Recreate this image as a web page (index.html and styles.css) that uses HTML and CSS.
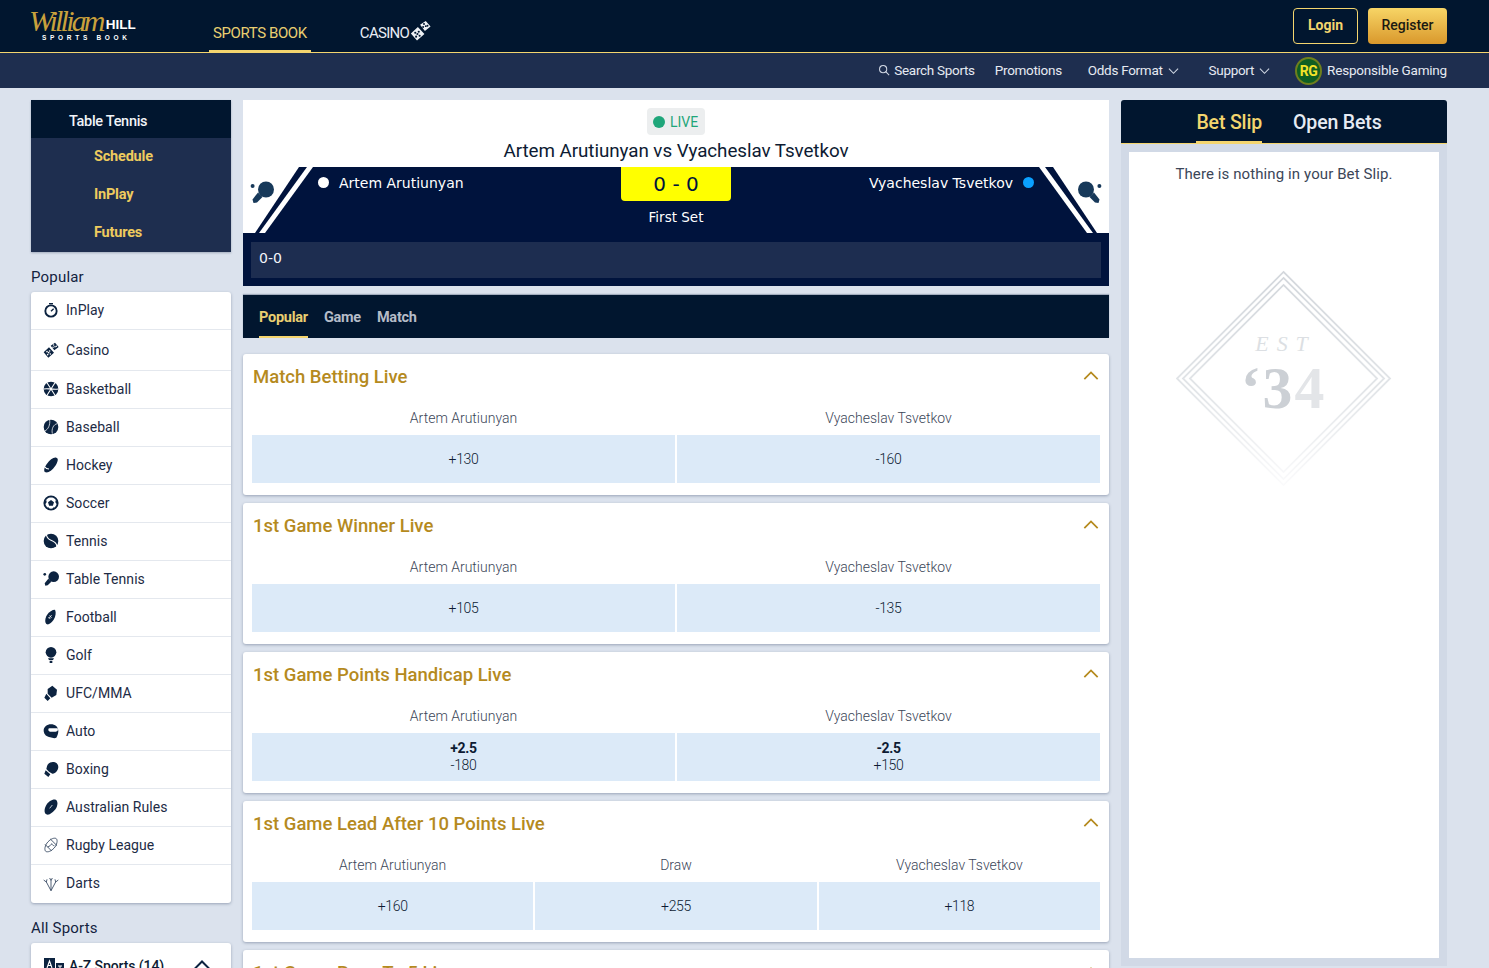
FILE: index.html
```html
<!DOCTYPE html>
<html lang="en">
<head>
<meta charset="utf-8">
<title>William Hill Sports Book</title>
<link rel="stylesheet" href="styles.css">
</head>
<body>
<svg class="defs" width="0" height="0" aria-hidden="true">
  <symbol id="i-paddle" viewBox="0 0 24 24">
    <circle cx="2.600" cy="5" r="2"/>
    <circle cx="16" cy="8.500" r="8"/>
    <path d="M8 11.500l4.500 4.500-5.500 5.500-3.500.5-1-3.500z"/>
  </symbol>
  <symbol id="i-dice" viewBox="0 0 24 24">
    <path d="M11.500 5.500L18 1l5.500 6.500-6.500 5zM1 15.500L9 8l7.500 8L8 23.500z"/>
    <g class="pip"><circle cx="16" cy="4.500" r="1.100"/><circle cx="18" cy="7" r="1.100"/><circle cx="20" cy="6.500" r="1.100"/><circle cx="15" cy="8" r="1.100"/><circle cx="6" cy="14.500" r="1.200"/><circle cx="10" cy="13.500" r="1.200"/><circle cx="8.500" cy="16" r="1.200"/><circle cx="7" cy="19" r="1.200"/><circle cx="11" cy="18" r="1.200"/></g>
  </symbol>
</svg>

<header class="top">
  <div class="logo">
    <div class="logo-main"><span class="logo-script">William</span><span class="logo-hill">HILL</span></div>
    <div class="logo-sub">SPORTS BOOK</div>
  </div>
  <nav class="main-nav">
    <a class="main-tab is-active">SPORTS BOOK</a>
    <a class="main-tab casino-tab">CASINO<svg class="casino-dice" viewBox="0 0 24 24"><use href="#i-dice"/></svg></a>
  </nav>
  <div class="auth">
    <a class="btn btn-login">Login</a>
    <a class="btn btn-register">Register</a>
  </div>
</header>

<nav class="sub-nav">
  <a class="sub-link sub-search"><svg class="search-ic" viewBox="0 0 14 14"><circle cx="6" cy="6" r="4.200"/><path d="M9 9l4 4"/></svg>Search Sports</a>
  <a class="sub-link sub-promos">Promotions</a>
  <a class="sub-link sub-odds">Odds Format<svg class="chev" viewBox="0 0 12 8"><path d="M1 1.500l5 5 5-5"/></svg></a>
  <a class="sub-link sub-support">Support<svg class="chev" viewBox="0 0 12 8"><path d="M1 1.500l5 5 5-5"/></svg></a>
  <a class="sub-link sub-rg"><span class="rg-badge">RG</span><span class="rg-text">Responsible Gaming</span></a>
</nav>

<main class="layout">
  <aside class="left">
    <section class="sport-menu">
      <div class="sport-menu-title">Table Tennis</div>
      <a class="sport-menu-item">Schedule</a>
      <a class="sport-menu-item">InPlay</a>
      <a class="sport-menu-item">Futures</a>
    </section>

    <h3 class="side-title">Popular</h3>
    <ul class="side-list">
      <li class="side-item"><svg class="side-ic" viewBox="0 0 24 24"><circle cx="12" cy="13.500" r="8.500" class="ic-ring"/><path d="M9 1.500h6v2H9z"/><path d="M12 14l4-4" class="ic-line"/></svg>InPlay</li>
      <li class="side-item side-item-casino"><svg class="side-ic" viewBox="0 0 24 24"><use href="#i-dice"/></svg>Casino</li>
      <li class="side-item"><svg class="side-ic" viewBox="0 0 24 24"><circle cx="12" cy="12" r="11"/><path class="ic-cut" d="M6 2.500L18 21.500M18 2.500L6 21.500M1 12c5-1 8 0 11 0s6 1 11 0"/></svg>Basketball</li>
      <li class="side-item"><svg class="side-ic" viewBox="0 0 24 24"><circle cx="12" cy="12" r="11"/><path class="ic-cut-thin" d="M10 1.500C11 8 8 16 2.500 18M21.500 7c-6 1-9 8-7.500 15"/></svg>Baseball</li>
      <li class="side-item"><svg class="side-ic" viewBox="0 0 24 24"><path d="M4 23c-4-1-2-8 2-13 4-6 10-10 14-9s2 7-2 13-10 10-14 9z"/><path class="ic-cut" d="M3 15c1 2 3 3 6 3"/></svg>Hockey</li>
      <li class="side-item"><svg class="side-ic" viewBox="0 0 24 24"><circle cx="12" cy="12" r="10" class="ic-ring"/><path d="M12 7.500l4.500 3.300-1.700 5.200H9.200l-1.700-5.200zM10 2h4l-2 2zM2.500 9.500L5 8l.5 3-2.500 3zM21.500 9.500L19 8l-.5 3 2.500 3zM6 20l2.500-1.500L10 22zM18 20l-2.500-1.500L14 22z"/></svg>Soccer</li>
      <li class="side-item"><svg class="side-ic" viewBox="0 0 24 24"><circle cx="12" cy="12" r="11"/><path class="ic-cut" d="M5 2.500c1 5 3 7 7 8.500s8 4 9 9"/></svg>Tennis</li>
      <li class="side-item"><svg class="side-ic" viewBox="0 0 24 24"><use href="#i-paddle"/></svg>Table Tennis</li>
      <li class="side-item"><svg class="side-ic" viewBox="0 0 24 24"><path d="M6 23c-4-2-3-9 0-14 3-5 8-8 12-8 2 4 1 10-2 15-3 4-7 8-10 7z"/><path class="ic-cut-thin" d="M9 14l4-5M9.500 10l3.500 3M8 12l3 3"/></svg>Football</li>
      <li class="side-item"><svg class="side-ic" viewBox="0 0 24 24"><circle cx="12" cy="8" r="8"/><path d="M7.500 17h9l-1.500 2.500H9zM10 20.500h4V24h-4z"/></svg>Golf</li>
      <li class="side-item"><svg class="side-ic" viewBox="0 0 24 24"><path d="M7 6l7-5 7 6-1 8-7 4-6-6zM5 13l6 7-4 4-5-5z"/></svg>UFC/MMA</li>
      <li class="side-item"><svg class="side-ic" viewBox="0 0 24 24"><path d="M12 2c6 0 11 4 11 10 0 3-1 7-3 10l-3 1-8-2C4 20 1 16 1 11 1 6 6 2 12 2z"/><path class="ic-white" d="M11 8h11c1 3 0 5-3 5h-7c-2 0-4-1-4-3s1-2 3-2z"/></svg>Auto</li>
      <li class="side-item"><svg class="side-ic" viewBox="0 0 24 24"><path d="M6 8c1-5 7-8 12-6s6 7 4 11-5 6-8 6l-5-3-4-4zM4 14l7 6-3 4-6-5z"/></svg>Boxing</li>
      <li class="side-item"><svg class="side-ic" viewBox="0 0 24 24"><path d="M5 23c-4-2-3-9 0-14 3-5 9-9 14-8 4 2 3 9 0 14-4 5-10 10-14 8z"/><path class="ic-cut-thin" d="M10 14l4-5"/></svg>Australian Rules</li>
      <li class="side-item"><svg class="side-ic ic-outline" viewBox="0 0 24 24"><path d="M5 22c-3-1-3-7 1-13 4-5 9-8 13-7 3 1 3 7-1 13-4 5-9 8-13 7z"/><path d="M3 11l10 10M11 3l10 10M7 15c3-1 5-3 6-5 1 2 2 3 4 3"/></svg>Rugby League</li>
      <li class="side-item side-item-last"><svg class="side-ic ic-outline" viewBox="0 0 24 24"><path d="M12 22V7M12 22L5 9M12 22l7-13M1 6l4 3 1-4M23 6l-4 3-1-4M10 3l2 4 2-4"/></svg>Darts</li>
    </ul>

    <h3 class="side-title side-title-all">All Sports</h3>
    <div class="side-list az">
      <svg class="az-ic" viewBox="0 0 20 16"><path d="M0 0h11v12H0z"/><path d="M12 5h8v10h-8z"/><path class="ic-cut-thin" d="M3 10l2.500-7L8 10M4 7.500h3M14 8h4M16 8v5"/></svg>
      <span class="az-label">A-Z Sports (14)</span>
      <svg class="az-chev" viewBox="0 0 18 10"><path d="M1.500 9L9 1.500 16.500 9"/></svg>
    </div>
  </aside>

  <section class="center">
    <div class="scoreboard">
      <div class="score-head">
        <span class="live"><i class="live-dot"></i>LIVE</span>
        <h1 class="match-title">Artem Arutiunyan vs Vyacheslav Tsvetkov</h1>
      </div>
      <div class="score-band">
        <svg class="corner corner-left" viewBox="0 0 70 66">
          <path class="c-white" d="M0 0h70L22 66H0z"/>
          <path class="c-navy" d="M56 0h8L16 66h-4z"/>
          <use href="#i-paddle" class="c-paddle" x="7" y="14" width="24" height="24"/>
        </svg>
        <svg class="corner corner-right" viewBox="0 0 70 66">
          <path class="c-white" d="M0 0h70v66H48z"/>
          <path class="c-navy" d="M6 0h8l44 66h-4z"/>
          <g transform="translate(63 14) scale(-1 1)"><use href="#i-paddle" class="c-paddle" width="24" height="24"/></g>
        </svg>
        <div class="player player-home"><i class="pdot pdot-white"></i>Artem Arutiunyan</div>
        <div class="score-mid">
          <div class="score-box">0 - 0</div>
          <div class="score-set">First Set</div>
        </div>
        <div class="player player-away">Vyacheslav Tsvetkov<i class="pdot pdot-blue"></i></div>
      </div>
      <div class="score-bottom"><div class="score-line">0-0</div></div>
    </div>

    <nav class="tabs">
      <a class="tab is-active">Popular</a>
      <a class="tab">Game</a>
      <a class="tab">Match</a>
    </nav>

    <article class="market">
      <header class="market-head"><h2 class="market-title">Match Betting Live</h2><svg class="market-chev" viewBox="0 0 18 10"><path d="M1.500 9L9 1.500 16.500 9"/></svg></header>
      <div class="runners cols-2"><span>Artem Arutiunyan</span><span>Vyacheslav Tsvetkov</span></div>
      <div class="odds cols-2"><button class="odd">+130</button><button class="odd">-160</button></div>
    </article>

    <article class="market">
      <header class="market-head"><h2 class="market-title">1st Game Winner Live</h2><svg class="market-chev" viewBox="0 0 18 10"><path d="M1.500 9L9 1.500 16.500 9"/></svg></header>
      <div class="runners cols-2"><span>Artem Arutiunyan</span><span>Vyacheslav Tsvetkov</span></div>
      <div class="odds cols-2"><button class="odd">+105</button><button class="odd">-135</button></div>
    </article>

    <article class="market">
      <header class="market-head"><h2 class="market-title">1st Game Points Handicap Live</h2><svg class="market-chev" viewBox="0 0 18 10"><path d="M1.500 9L9 1.500 16.500 9"/></svg></header>
      <div class="runners cols-2"><span>Artem Arutiunyan</span><span>Vyacheslav Tsvetkov</span></div>
      <div class="odds cols-2"><button class="odd"><b>+2.5</b>-180</button><button class="odd"><b>-2.5</b>+150</button></div>
    </article>

    <article class="market">
      <header class="market-head"><h2 class="market-title">1st Game Lead After 10 Points Live</h2><svg class="market-chev" viewBox="0 0 18 10"><path d="M1.500 9L9 1.500 16.500 9"/></svg></header>
      <div class="runners cols-3"><span>Artem Arutiunyan</span><span>Draw</span><span>Vyacheslav Tsvetkov</span></div>
      <div class="odds cols-3"><button class="odd">+160</button><button class="odd">+255</button><button class="odd">+118</button></div>
    </article>

    <article class="market">
      <header class="market-head"><h2 class="market-title">1st Game Race To 5 Live</h2><svg class="market-chev" viewBox="0 0 18 10"><path d="M1.500 9L9 1.500 16.500 9"/></svg></header>
    </article>
  </section>

  <aside class="right">
    <div class="slip-tabs">
      <a class="slip-tab is-active">Bet Slip</a>
      <a class="slip-tab">Open Bets</a>
    </div>
    <div class="slip-body">
      <p class="slip-empty">There is nothing in your Bet Slip.</p>
      <svg class="est" viewBox="0 0 220 220" aria-hidden="true">
        <defs>
          <linearGradient id="fade" gradientUnits="userSpaceOnUse" x1="0" y1="0" x2="0" y2="218">
            <stop offset="0" stop-color="#d3d7dc"/>
            <stop offset=".55" stop-color="#e2e5e8"/>
            <stop offset="1" stop-color="#fbfbfc"/>
          </linearGradient>
        </defs>
        <path class="est-line" d="M108 2L215 109 108 216 1 109z"/>
        <path class="est-line" d="M108 8L209 109 108 210 7 109z"/>
        <path class="est-line" d="M108 15L202 109 108 203 14 109z"/>
        <text class="est-small" x="110" y="81" text-anchor="middle">EST</text>
        <text class="est-big" x="108" y="139" text-anchor="middle">‘3<tspan class="est-four">4</tspan></text>
      </svg>
    </div>
  </aside>
</main>
</body>
</html>
```

FILE: styles.css
```css
* { box-sizing: border-box; }
html, body { margin: 0; padding: 0; }
body {
  width: 1489px;
  height: 968px;
  overflow: hidden;
  background: #dbe2ed;
  font-family: "Roboto", "Liberation Sans", sans-serif;
  color: #0d1b33;
}
a { color: inherit; text-decoration: none; }
h1, h2, h3, p, ul { margin: 0; padding: 0; font-weight: 400; }
ul { list-style: none; }
.defs { position: absolute; }
.pip { fill: var(--pip, #fff); }

/* top bar */
.top {
  height: 53px;
  background: #01162f;
  border-bottom: 1px solid #f4d56e;
  display: flex;
  align-items: stretch;
  padding: 0 42px 0 31px;
}
.logo { width: 178px; padding-top: 9px; }
.logo-main { display: flex; align-items: flex-end; height: 24px; margin-left: -2px; }
.logo-script {
  font-family: "Liberation Serif", serif;
  font-style: italic;
  font-size: 30px;
  line-height: 24px;
  letter-spacing: -2.800px;
  color: #c9a13c;
}
.logo-hill {
  font-family: "Liberation Sans", sans-serif;
  font-weight: 700;
  font-size: 13.500px;
  line-height: 15px;
  color: #fff;
  margin-left: 3px;
  margin-bottom: 1px;
}
.logo-sub {
  font-family: "Liberation Sans", sans-serif;
  font-size: 6.500px;
  line-height: 9px;
  letter-spacing: 3.700px;
  color: #fff;
  font-weight: 700;
  padding-left: 11px;
  white-space: nowrap;
}
.main-nav { display: flex; flex: 1; align-items: stretch; gap: 45px; }
.main-tab {
  display: flex;
  align-items: center;
  padding: 15px 4px 0;
  font-size: 15px;
  letter-spacing: -.4px;
  color: #e9edf5;
  border-bottom: 3px solid transparent;
  margin-bottom: -1px;
}
.main-tab.is-active { color: #e9cf71; border-bottom-color: #f4d56e; }
.casino-tab { padding-right: 0; letter-spacing: -.7px; }
.casino-dice { width: 21px; height: 21px; fill: #eef1f5; margin: -4px 0 0 1px; --pip: #01162f; }
.auth { display: flex; gap: 10px; padding-top: 8px; }
.btn {
  height: 36px;
  display: flex;
  align-items: center;
  justify-content: center;
  border-radius: 4px;
  font-size: 14px;
  padding-bottom: 2px;
}
.btn-login { width: 65px; border: 1px solid #f4d56e; color: #f4d56e; font-weight: 700; }
.btn-register { width: 79px; background: linear-gradient(#f7d566, #d9982c); color: #1b1a12; font-weight: 500; }

/* sub nav */
.sub-nav {
  height: 35px;
  background: #1e2e4f;
  display: flex;
  align-items: center;
  padding: 0 42px 0 0;
  justify-content: flex-end;
  color: #e6eaf2;
  font-size: 13.500px;
  letter-spacing: -.3px;
}
.sub-link { display: flex; align-items: center; white-space: nowrap; padding-bottom: 2px; }
.sub-promos { margin-left: 20px; }
.sub-odds { margin-left: 26px; }
.sub-support { margin-left: 30px; }
.sub-rg { margin-left: 25px; padding-bottom: 0; }
.rg-text { padding-bottom: 2px; letter-spacing: -.2px; }
.search-ic { width: 12px; height: 12px; fill: none; stroke: #cfd6e2; stroke-width: 1.200; margin-right: 4px; }
.chev { width: 11px; height: 8px; fill: none; stroke: #cfd6e2; stroke-width: 1.200; margin-left: 5px; margin-top: 3px; }
.rg-badge {
  width: 27px;
  height: 28px;
  margin-right: 5px;
  border-radius: 50%;
  background: #0f5f22;
  border: 2px solid #6e7f1d;
  color: #f3e32a;
  font-weight: 700;
  font-size: 14px;
  letter-spacing: -.5px;
  display: flex;
  align-items: center;
  justify-content: center;
}

/* layout */
.layout {
  display: grid;
  grid-template-columns: 200px 866px 326px;
  column-gap: 12px;
  padding: 12px 42px 0 31px;
  align-items: start;
}

/* left */
.sport-menu { background: #1e2e4f; box-shadow: 0 1px 2px rgba(30, 46, 79, .3); padding-bottom: 1px; }
.sport-menu-title {
  height: 38px;
  background: #01162f;
  color: #f2f4f8;
  font-size: 14.500px;
  font-weight: 500;
  letter-spacing: -.3px;
  padding-left: 38px;
  display: flex;
  align-items: center;
  padding-top: 4px;
}
.sport-menu-item {
  height: 38px;
  display: flex;
  align-items: center;
  padding-left: 63px;
  color: #eecb5e;
  font-size: 14.500px;
  font-weight: 700;
  letter-spacing: -.2px;
}
.sport-menu-item:first-of-type { height: 37px; }
.side-title { font-size: 15px; color: #13233f; margin: 16px 0 6px; line-height: 18px; font-weight: 400; letter-spacing: .2px; }
.side-title-all { margin: 16px 0 6px; }
.side-list {
  background: #fff;
  border-radius: 3px;
  box-shadow: 0 1px 3px rgba(30, 46, 79, .35);
}
.side-item {
  height: 38px;
  display: flex;
  align-items: center;
  padding-left: 12px;
  padding-bottom: 2px;
  font-size: 14px;
  color: #1d2b45;
  border-bottom: 1px solid #e4e8ee;
  letter-spacing: .05px;
}
.side-item-last { border-bottom: 0; }
.side-item-casino { height: 41px; padding-bottom: 1px; }
.side-ic { width: 16px; height: 16px; margin: 1px 7px 0 0; fill: #0c2340; flex: none; }
.ic-ring { fill: none; stroke: #0c2340; stroke-width: 2.800; }
.ic-line { fill: none; stroke: #0c2340; stroke-width: 2; }
.ic-cut { fill: none; stroke: #fff; stroke-width: 1.600; }
.ic-cut-thin { fill: none; stroke: #fff; stroke-width: 1.100; }
.ic-white { fill: #fff; }
.ic-outline { fill: none; stroke: #33455f; stroke-width: 1.300; }
.az { height: 40px; display: flex; align-items: flex-start; padding: 15px 20px 0 13px; }
.az-ic { width: 20px; height: 16px; fill: #0c2340; flex: none; }
.az-label { font-size: 14px; font-weight: 500; margin-left: 5px; letter-spacing: -.1px; }
.az-chev { width: 18px; height: 10px; margin-left: auto; fill: none; stroke: #0c2340; stroke-width: 2; margin-top: 2px; }

/* center */
.scoreboard { background: #fff; }
.score-head { height: 67px; display: flex; flex-direction: column; align-items: center; padding-top: 8px; }
.live {
  height: 27px;
  width: 58px;
  background: #eceeef;
  border-radius: 4px;
  display: flex;
  align-items: center;
  gap: 5px;
  padding-left: 6px;
  color: #1fa67a;
  font-size: 14px;
}
.live-dot { width: 12px; height: 12px; border-radius: 50%; background: #1fa67a; }
.match-title { font-size: 18.800px; color: #0d1b33; line-height: 24px; margin-top: 4px; letter-spacing: -.05px; }
.score-band {
  position: relative;
  height: 66px;
  background: #00133d;
  display: flex;
  justify-content: space-between;
  color: #fff;
  font-family: "DejaVu Sans", sans-serif;
}
.corner { position: absolute; top: 0; width: 70px; height: 66px; }
.corner-left { left: 0; }
.corner-right { right: 0; }
.c-white { fill: #fff; }
.c-navy { fill: #00133d; }
.c-paddle { fill: #17395a; }
.player {
  width: 378px;
  display: flex;
  align-items: center;
  gap: 10px;
  font-size: 14px;
  height: 31px;
  position: relative;
}
.player-home { padding-left: 75px; }
.player-away { justify-content: flex-end; padding-right: 75px; }
.pdot { width: 11px; height: 11px; border-radius: 50%; flex: none; }
.pdot-white { background: #fff; }
.pdot-blue { background: #0aa0ff; }
.score-mid { width: 110px; text-align: center; }
.score-box {
  height: 34px;
  background: #ffff00;
  color: #00133d;
  font-size: 20px;
  line-height: 34px;
  border-radius: 0 0 4px 4px;
}
.score-set { font-size: 13.500px; line-height: 18px; margin-top: 7px; }
.score-bottom { background: #00133d; padding: 9px 8px 8px; }
.score-line {
  height: 36px;
  background: #1d2d50;
  color: #f2f4f8;
  font-family: "DejaVu Sans", sans-serif;
  font-size: 14px;
  line-height: 33px;
  padding-left: 8px;
}

.tabs {
  height: 43px;
  margin-top: 9px;
  background: #01162f;
  box-shadow: 0 -1px 1px rgba(30, 46, 79, .3);
  display: flex;
  padding-left: 16px;
  gap: 16px;
}
.tab {
  display: flex;
  align-items: center;
  color: #b5bcc8;
  font-size: 14.500px;
  font-weight: 700;
  letter-spacing: -.25px;
  border-bottom: 2px solid transparent;
  padding-top: 3px;
}
.tab.is-active { color: #e9cf71; border-bottom-color: #f4d56e; }

.market {
  background: #fff;
  margin-top: 16px;
  height: 141px;
  border-radius: 3px;
  padding: 0 9px;
  box-shadow: 0 1px 3px rgba(30, 46, 79, .35);
}
.market + .market { margin-top: 8px; }
.market-head { height: 45px; display: flex; align-items: center; justify-content: space-between; padding: 0 1px; }
.market-title { font-size: 18.500px; color: #b58a1e; font-weight: 500; letter-spacing: 0; }
.market-chev { width: 16px; height: 9px; fill: none; stroke: #b58a1e; stroke-width: 2; margin-top: -2px; }
.runners { display: grid; padding-top: 11px; height: 36px; text-align: center; font-size: 14px; font-weight: 300; color: #3b4658; letter-spacing: 0; }
.odds { display: grid; gap: 2px; height: 48px; }
.cols-2 { grid-template-columns: 1fr 1fr; }
.cols-3 { grid-template-columns: 1fr 1fr 1fr; }
.runners.cols-2, .runners.cols-3 { column-gap: 2px; }
.odd {
  border: 0;
  padding: 0;
  background: #dceaf8;
  font-family: inherit;
  font-size: 14px;
  line-height: 17px;
  font-weight: 300;
  color: #0d1b33;
  letter-spacing: -.35px;
}
.odd b { display: block; font-weight: 700; }

/* right */
.slip-tabs {
  height: 44px;
  background: #01162f;
  display: flex;
  justify-content: center;
  gap: 31px;
  padding-left: 10px;
  border-radius: 3px 3px 0 0;
  border-bottom: 1px solid #f4d56e;
}
.slip-tab {
  display: flex;
  align-items: center;
  color: #e6ebf3;
  font-size: 19.500px;
  font-weight: 500;
  border-bottom: 3px solid transparent;
  padding-top: 4px;
  margin-bottom: -1px;
  letter-spacing: -.15px;
}
.slip-tab.is-active { color: #f4d56e; border-bottom-color: #f4d56e; }
.slip-body { position: relative; background: #fff; height: 822px; border: 8px solid #d1d9e6; padding-top: 10px; text-align: center; }
.slip-empty { font-size: 15px; color: #3b4658; line-height: 24px; letter-spacing: .1px; }
.est { position: absolute; left: 47px; top: 118px; width: 219px; height: 219px; }
.est-line { fill: none; stroke: url(#fade); stroke-width: 1.800; }
.est-small { font-family: "Liberation Serif", serif; font-style: italic; font-size: 22px; letter-spacing: 8px; fill: #dcdfe3; }
.est-big { font-family: "Liberation Serif", serif; font-weight: 700; font-size: 60px; letter-spacing: 2px; fill: #ccd0d5; }
.est-four { fill: #e3e5e8; }
```
